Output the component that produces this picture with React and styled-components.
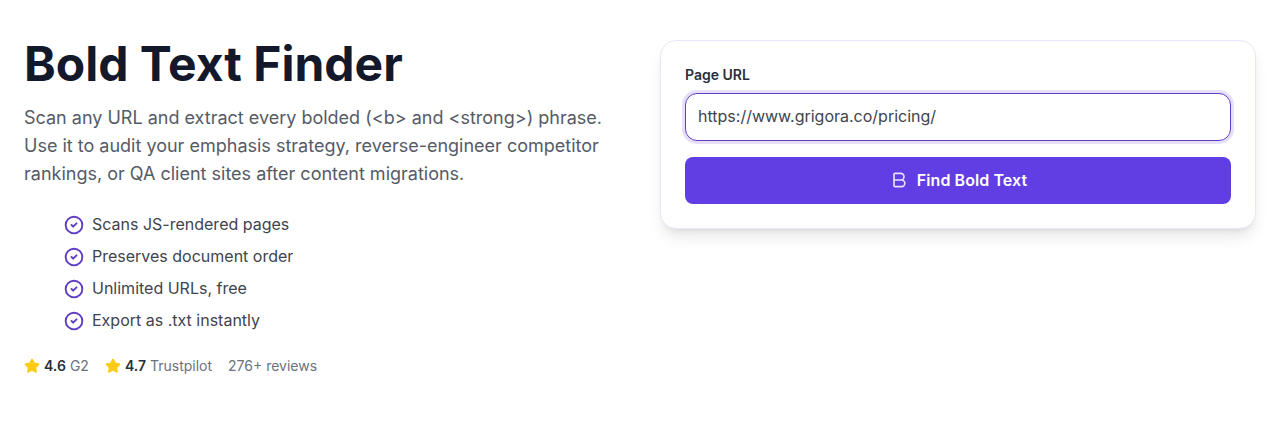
import React from "react";
import styled, { createGlobalStyle } from "styled-components";
import { Bold, CircleCheck, Star } from "lucide-react";

const Global = createGlobalStyle`
  html, body { margin: 0; padding: 0; background: #fff; }
  body { font-family: Inter, "Liberation Sans", sans-serif; }
`;

const Page = styled.main`
  display: grid;
  grid-template-columns: 596px 596px;
  column-gap: 40px;
  align-items: start;
  padding: 40px 24px 0;
  width: 1280px;
  height: 440px;
  box-sizing: border-box;
  overflow: hidden;
`;

const Intro = styled.section`
  display: flex;
  flex-direction: column;
`;

const Title = styled.h1`
  margin: 0 0 16px;
  font-size: 48px;
  line-height: 48px;
  font-weight: 700;
  color: #14182b;
`;

const Lead = styled.p`
  margin: 0 0 24px;
  font-size: 18px;
  line-height: 28px;
  color: #555b66;
`;

const Features = styled.ul`
  list-style: none;
  margin: 0 0 24px;
  padding: 0 0 0 40px;
  display: flex;
  flex-direction: column;
  gap: 8px;
`;

const Feature = styled.li`
  display: flex;
  align-items: center;
  gap: 8px;
  font-size: 16px;
  line-height: 24px;
  color: #40444e;
  svg { color: #5f3dc4; flex: none; margin-top: 1px; }
`;

const Ratings = styled.div`
  display: flex;
  align-items: center;
  gap: 16px;
  font-size: 14px;
  line-height: 20px;
  color: #6b7280;
`;

const Rating = styled.span`
  display: inline-flex;
  align-items: center;
  gap: 4px;
  svg { color: #facc15; fill: #facc15; flex: none; }
  b { font-weight: 600; color: #2b2f3a; }
`;

const Card = styled.form`
  display: flex;
  flex-direction: column;
  padding: 24px;
  background: #fff;
  border: 1px solid #e9e5fb;
  border-radius: 16px;
  box-shadow: 0 10px 15px -3px rgba(0,0,0,.1), 0 4px 6px -4px rgba(0,0,0,.1);
`;

const Label = styled.label`
  font-size: 14px;
  line-height: 20px;
  font-weight: 600;
  color: #2b2f3a;
  margin-bottom: 8px;
`;

const UrlInput = styled.input`
  box-sizing: border-box;
  width: 100%;
  height: 48px;
  padding: 0 12px 2px;
  border: 1px solid #5f3dc4;
  border-radius: 12px;
  outline: none;
  box-shadow: 0 0 0 3px #e6e0fa;
  font: 400 16px Inter, sans-serif;
  color: #40444e;
  margin-bottom: 16px;
`;

const Submit = styled.button`
  display: flex;
  align-items: center;
  justify-content: center;
  gap: 8px;
  height: 47px;
  padding: 0 0 2px;
  border: 0;
  border-radius: 8px;
  background: #613de4;
  color: #fff;
  font: 600 16px Inter, sans-serif;
  letter-spacing: 0.08px;
  svg { opacity: .85; }
`;

const items = ["Scans JS-rendered pages", "Preserves document order", "Unlimited URLs, free", "Export as .txt instantly"];

export default function App() {
  return (
    <>
      <Global />
      <Page>
        <Intro>
          <Title>Bold Text Finder</Title>
          <Lead>
            Scan any URL and extract every bolded (&lt;b&gt; and &lt;strong&gt;) phrase. Use it to audit your emphasis strategy, reverse-engineer competitor rankings, or QA client sites after content migrations.
          </Lead>
          <Features>
            {items.map((t) => (
              <Feature key={t}><CircleCheck size={20} strokeWidth={2.3} />{t}</Feature>
            ))}
          </Features>
          <Ratings>
            <Rating><Star size={16} /><b>4.6</b> G2</Rating>
            <Rating><Star size={16} /><b>4.7</b> Trustpilot</Rating>
            <span>276+ reviews</span>
          </Ratings>
        </Intro>
        <Card onSubmit={(e) => e.preventDefault()}>
          <Label htmlFor="url">Page URL</Label>
          <UrlInput id="url" defaultValue="https://www.grigora.co/pricing/" />
          <Submit type="submit"><Bold size={20} strokeWidth={2} />Find Bold Text</Submit>
        </Card>
      </Page>
    </>
  );
}
